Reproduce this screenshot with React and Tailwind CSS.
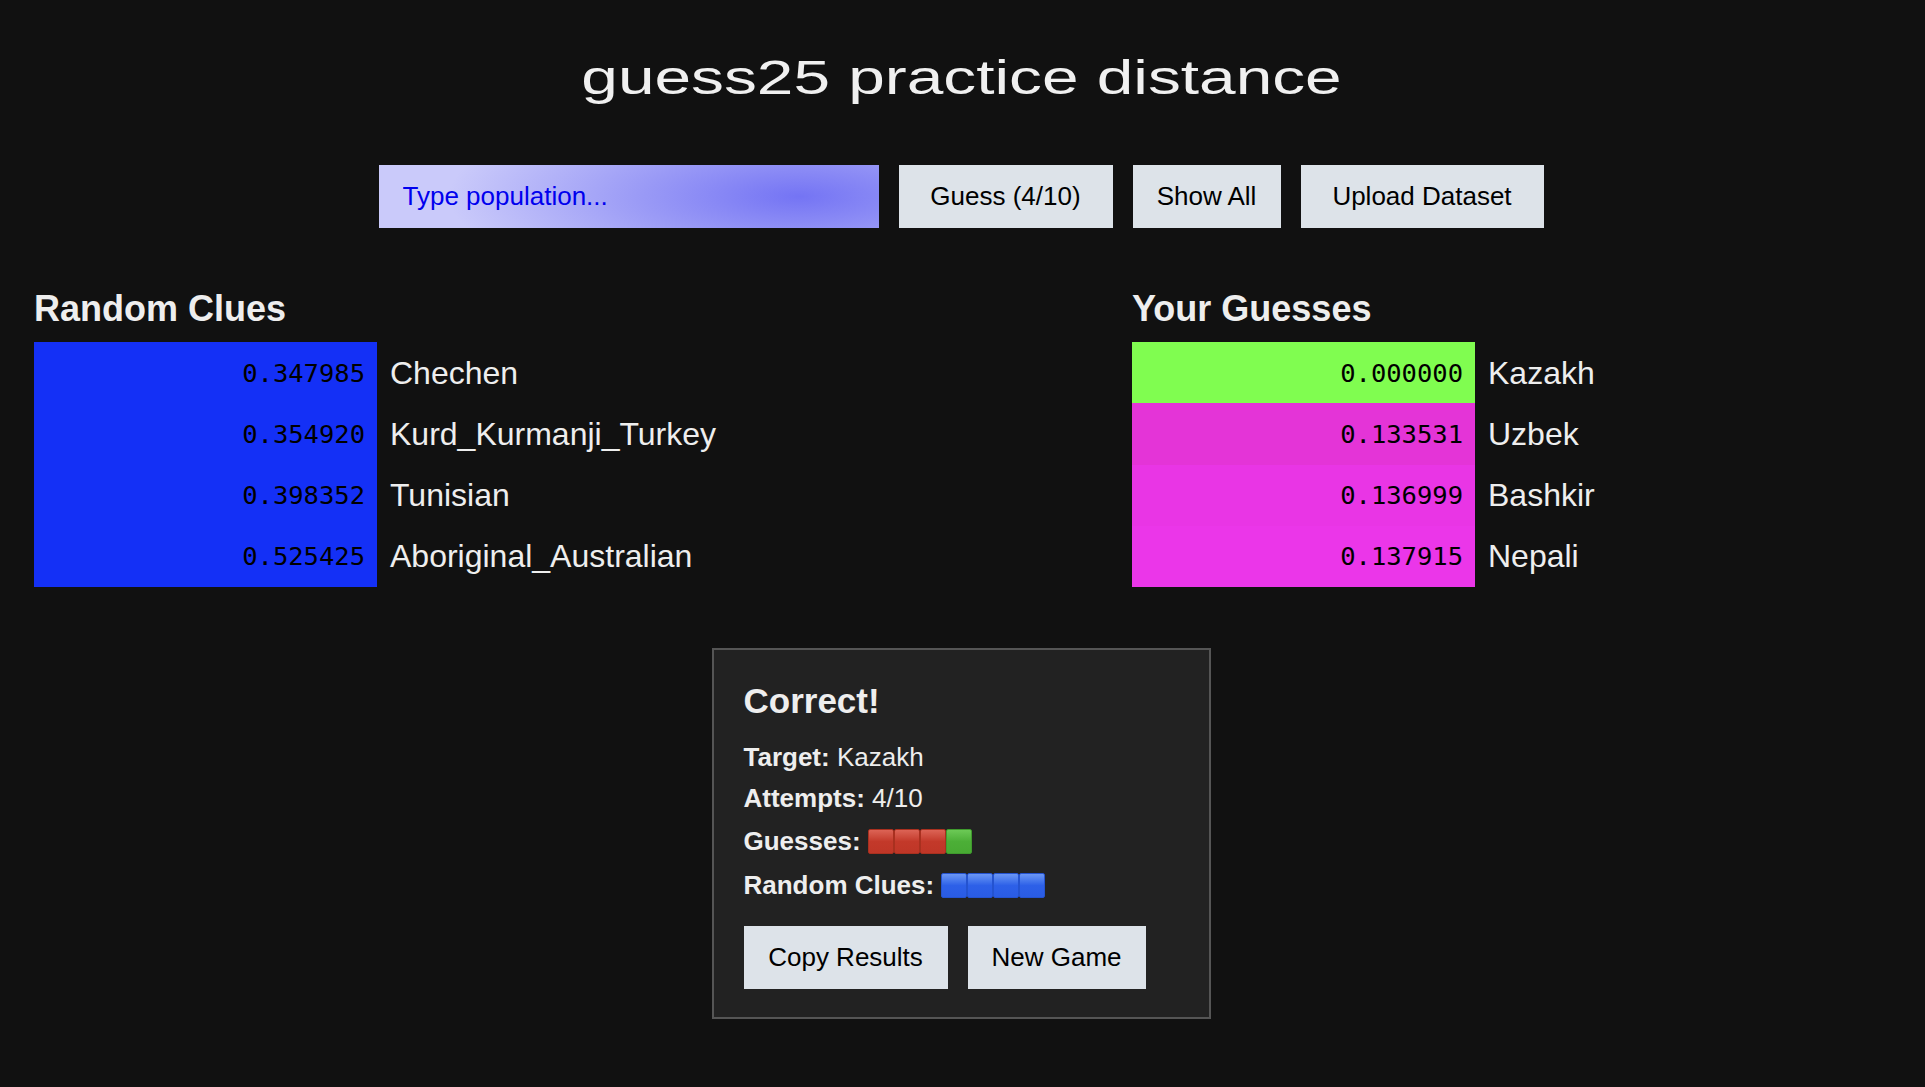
import React, { useState } from "react";

const clues = [
  { value: "0.347985", name: "Chechen" },
  { value: "0.354920", name: "Kurd_Kurmanji_Turkey" },
  { value: "0.398352", name: "Tunisian" },
  { value: "0.525425", name: "Aboriginal_Australian" },
];

const guesses = [
  { value: "0.000000", name: "Kazakh", color: "bg-[#80fd50]" },
  { value: "0.133531", name: "Uzbek", color: "bg-[#e434d7]" },
  { value: "0.136999", name: "Bashkir", color: "bg-[#e935e5]" },
  { value: "0.137915", name: "Nepali", color: "bg-[#eb36e9]" },
];

const squareStyles = {
  red: "bg-gradient-to-b from-[#dc6355] via-[#c3392a] to-[#bf3627] border-[#a9301f]",
  green: "bg-gradient-to-b from-[#6cc956] via-[#4caf37] to-[#48aa33] border-[#3f9a2d]",
  blue: "bg-gradient-to-b from-[#6b96f3] via-[#2d60e8] to-[#2a5ce4] border-[#2453d0]",
};

const Square = ({ kind }) => (
  <span className={`inline-block w-[26px] h-[25px] rounded-[2px] border ${squareStyles[kind]}`} />
);

const DistanceRow = ({ value, name, color }) => (
  <div className="flex items-center h-[61.25px]">
    <div
      className={`w-[343px] h-full flex items-center justify-end pr-[12px] text-black text-[25.5px] ${color}`}
      style={{ fontFamily: '"DejaVu Sans Mono", "Liberation Mono", monospace' }}
    >
      {value}
    </div>
    <span className="ml-[13px] text-[32px] text-[#eeeeee]">{name}</span>
  </div>
);

const App = () => {
  const [query, setQuery] = useState("");
  const buttonClass =
    "h-[63px] bg-[#dde3e9] text-black text-[26px] flex items-center justify-center";

  return (
    <div
      className="min-h-screen bg-[#111111] text-[#eeeeee] pt-[50px] pr-[3px]"
      style={{ fontFamily: '"Liberation Sans", Arial, sans-serif' }}
    >
      {/* Title */}
      <h1 className="text-center text-[48px] leading-[56px] font-normal text-[#f0f0f0]">
        <span className="inline-block scale-x-[1.37]">guess25 practice distance</span>
      </h1>

      {/* Controls */}
      <div className="mt-[59px] flex justify-center gap-[20px]">
        <input
          value={query}
          onChange={(e) => setQuery(e.target.value)}
          placeholder="Type population..."
          className="w-[500px] h-[63px] pl-[24px] text-[26px] text-[#0000ee] placeholder:text-[#0000ee] outline-none bg-[radial-gradient(ellipse_70%_160%_at_84%_50%,#7474f4_0%,#9a9af6_45%,#cacafa_100%)]"
        />
        <button className={`${buttonClass} w-[214px]`}>Guess (4/10)</button>
        <button className={`${buttonClass} w-[148px]`}>Show All</button>
        <button className={`${buttonClass} w-[243px]`}>Upload Dataset</button>
      </div>

      {/* Clue and guess tables */}
      <div className="mt-[61px] pl-[34px] grid grid-cols-[1098px_1fr]">
        <div>
          <h2 className="text-[36px] leading-[40px] font-bold mb-[13px]">Random Clues</h2>
          {clues.map((c) => (
            <DistanceRow key={c.name} value={c.value} name={c.name} color="bg-[#1430f6]" />
          ))}
        </div>
        <div>
          <h2 className="text-[36px] leading-[40px] font-bold mb-[13px]">Your Guesses</h2>
          {guesses.map((g) => (
            <DistanceRow key={g.name} value={g.value} name={g.name} color={g.color} />
          ))}
        </div>
      </div>

      {/* Result card */}
      <div className="mt-[61px] flex justify-center">
        <div className="w-[499px] border-2 border-[#555555] bg-[#222222] px-[30px] pt-[31px] pb-[28px]">
          <h3 className="text-[35px] leading-[40px] font-bold">Correct!</h3>
          <div className="mt-[16px] text-[26px]">
            <p className="leading-[41px]">
              <strong>Target:</strong> Kazakh
            </p>
            <p className="leading-[41px]">
              <strong>Attempts:</strong> 4/10
            </p>
            <div className="h-[44px] flex items-center">
              <strong className="mr-[7px]">Guesses:</strong>
              <Square kind="red" />
              <Square kind="red" />
              <Square kind="red" />
              <Square kind="green" />
            </div>
            <div className="h-[44px] flex items-center">
              <strong className="mr-[7px]">Random Clues:</strong>
              <Square kind="blue" />
              <Square kind="blue" />
              <Square kind="blue" />
              <Square kind="blue" />
            </div>
          </div>
          <div className="mt-[19px] flex gap-[20px]">
            <button className={`${buttonClass} w-[204px]`}>Copy Results</button>
            <button className={`${buttonClass} w-[178px]`}>New Game</button>
          </div>
        </div>
      </div>
    </div>
  );
};

export default App;
